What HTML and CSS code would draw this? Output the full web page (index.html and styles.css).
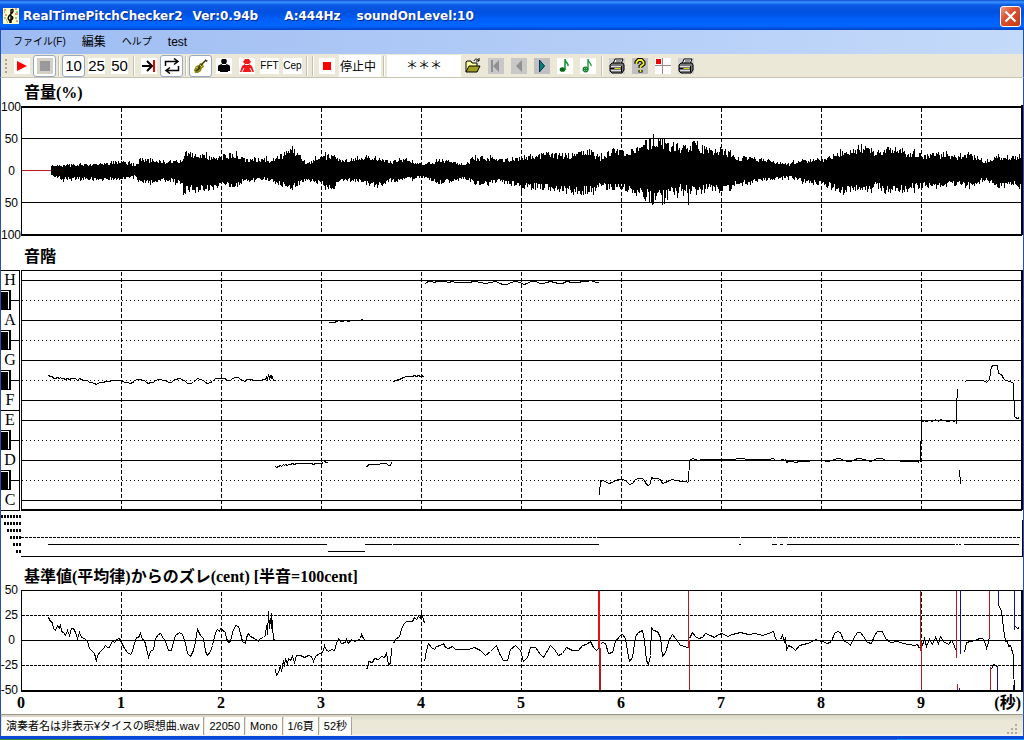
FILE: index.html
```html
<!DOCTYPE html>
<html lang="ja">
<head>
    <meta charset="UTF-8">
    <meta name="viewport" content="width=device-width, initial-scale=1.0">
    <title>RealTimePitchChecker2</title>
    <link rel="stylesheet" href="styles.css">
</head>
<body>
    <header class="titlebar">
        <svg class="app-icon" width="16" height="16" viewBox="0 0 16 16">
            <rect width="16" height="16" fill="#ffffc8"/>
            <path d="M1 2h2M12 1h2M2 7h2M12 6h3M3 12h1M13 13h2" stroke="#e03020"/>
            <path d="M1 4h1M13 4h2M1 10h2M12 10h2M4 14h1" stroke="#30a040"/>
            <path d="M8 15V2c2-2 3 1 1 3L6 8c-2 3 0 5 2 4s3-3 0-4M6 14h2" fill="none" stroke="#000" stroke-width="1.4"/>
        </svg>
        <h1 class="title">
            <span class="title-name">RealTimePitchChecker2</span>
            <span class="title-version">Ver:0.94b</span>
            <span class="title-tuning">A:444Hz</span>
            <span>soundOnLevel:10</span>
        </h1>
        <button class="close" type="button" aria-label="閉じる">
            <svg width="13" height="13" viewBox="0 0 13 13"><path d="M1.500 1.500l10 10M11.500 1.500l-10 10" stroke="#fff" stroke-width="2.200"/></svg>
        </button>
    </header>

    <nav class="menubar">
        <button class="menu kana" type="button">ファイル(F)</button>
        <button class="menu" type="button">編集</button>
        <button class="menu kana" type="button">ヘルプ</button>
        <button class="menu" type="button">test</button>
    </nav>

    <div class="toolbar">
        <span class="grip"></span>
        <button class="tool" type="button" aria-label="再生">
            <svg viewBox="0 0 16 16"><rect width="16" height="16" fill="#fff"/><path d="M3 3l10 5-10 5z" fill="#f00"/></svg>
        </button>
        <button class="tool on" type="button" aria-label="停止">
            <svg viewBox="0 0 16 16"><rect width="16" height="16" fill="#d4d0c8"/><rect x="3" y="3" width="10" height="10" fill="#999"/></svg>
        </button>
        <span class="sep"></span>
        <button class="tool num on" type="button">10</button>
        <button class="tool num" type="button"><span>25</span></button>
        <button class="tool num" type="button"><span>50</span></button>
        <span class="sep"></span>
        <button class="tool" type="button" aria-label="末尾で止める">
            <svg viewBox="0 0 16 16"><rect width="16" height="16" fill="#fff"/><path d="M1 8h9M6 3l5 5-5 5" fill="none" stroke="#000" stroke-width="2"/><rect x="12" y="2" width="2" height="12" fill="#e00"/></svg>
        </button>
        <button class="tool on" type="button" aria-label="くり返し">
            <svg viewBox="0 0 16 16"><path d="M1.500 8V3.500H13M10 .5l4 3-4 3M14.500 8v4.500H3M6 9.500l-4 3 4 3" fill="none" stroke="#000" stroke-width="1.500"/></svg>
        </button>
        <span class="sep"></span>
        <button class="tool on" type="button" aria-label="バイオリン">
            <svg viewBox="0 0 16 16"><path d="M1 12l2-4 3-1 1-2 3 1 1 3-2 1-1 3-3 2-3 0z" fill="#8a8a10"/><path d="M5 10l8-8M3 13l4-3" stroke="#403800" stroke-width="1.500"/><path d="M12 1l3 2-2 1z" fill="#303010"/><path d="M3 9l2 1M7 7l2 2" stroke="#d8d040"/></svg>
        </button>
        <button class="tool" type="button" aria-label="男声">
            <svg viewBox="0 0 16 16"><rect width="16" height="16" fill="#fff"/><path d="M6 1h4l1 2-1 3 3 1 1 1v5h-2v1H4v-1H2V8l1-1 3-1-1-3z" fill="#000"/><path d="M6 6.500h4" stroke="#fff"/></svg>
        </button>
        <button class="tool" type="button" aria-label="女声">
            <svg viewBox="0 0 16 16"><rect width="16" height="16" fill="#fff"/><path d="M6 1h4l2 3-2 2 3 2 2 6H1l2-6 3-2-2-2z" fill="#f01818"/><path d="M5 10l-2 4M11 10l2 4M6 6.500h4" stroke="#fff"/></svg>
        </button>
        <button class="tool word" type="button"><span>FFT</span></button>
        <button class="tool word" type="button"><span>Cep</span></button>
        <span class="sep"></span>
        <span class="sep"></span>
        <button class="tool state" type="button">
            <svg viewBox="0 0 16 16"><rect width="16" height="16" fill="#fff"/><rect x="4" y="4" width="8" height="8" fill="#f00"/></svg>
            <span>停止中</span>
        </button>
        <span class="sep"></span>
        <output class="note-name">＊＊＊</output>
        <button class="tool" type="button" aria-label="開く">
            <svg viewBox="0 0 16 16"><path d="M1 14V4l1-1h4l1 2h5v3" fill="#ffffa0" stroke="#000"/><path d="M1 14l3-6h11l-3 6z" fill="#a0a020" stroke="#000"/><path d="M9 3c1-3 4-2 5 0M14 0v3h-3" fill="none" stroke="#000"/></svg>
        </button>
        <button class="tool" type="button" aria-label="先頭へ">
            <svg viewBox="0 0 16 16"><rect width="16" height="16" fill="#c8c8c8"/><path d="M3 2h2v12H3zM11 2v12L5 8z" fill="#909090"/></svg>
        </button>
        <button class="tool" type="button" aria-label="前へ">
            <svg viewBox="0 0 16 16"><rect width="16" height="16" fill="#c8c8c8"/><path d="M11 2v12L5 8z" fill="#909090"/></svg>
        </button>
        <button class="tool" type="button" aria-label="次へ">
            <svg viewBox="0 0 16 16"><rect width="16" height="16" fill="#c0c0c0"/><path d="M5 2v12l6-6z" fill="#008070"/><path d="M5.500 2v12l5-6z" fill="none" stroke="#103060"/></svg>
        </button>
        <button class="tool" type="button" aria-label="音符">
            <svg viewBox="0 0 16 16"><rect width="16" height="16" fill="#fff"/><ellipse cx="5.500" cy="11.500" rx="2.800" ry="2.300" fill="#086818"/><path d="M8 12V1c0 4 4 4 3 7" fill="none" stroke="#109030" stroke-width="1.500"/></svg>
        </button>
        <button class="tool" type="button" aria-label="音符を追加">
            <svg viewBox="0 0 16 16"><rect width="16" height="16" fill="#fff"/><circle cx="5.500" cy="11.500" r="2.300" fill="none" stroke="#107828" stroke-width="1.300"/><path d="M8 12V1c0 4 4 4 3 7M5.500 10v3M4 11.500h3" fill="none" stroke="#109030" stroke-width="1.300"/></svg>
        </button>
        <span class="sep"></span>
        <button class="tool" type="button" aria-label="印刷">
            <svg viewBox="0 0 16 16"><use href="#printer"/></svg>
        </button>
        <button class="tool" type="button" aria-label="ヘルプ">
            <svg viewBox="0 0 16 16"><rect width="16" height="16" fill="#c0c0c0"/><path d="M4.500 6V4l2-2h3l2 2v2L8.500 8.500V10M8.500 12v2.500" fill="none" stroke="#000" stroke-width="4"/><path d="M4.500 6V4l2-2h3l2 2v2L8.500 8.500V10.500M8.500 12v2" fill="none" stroke="#f0f020" stroke-width="1.800"/></svg>
        </button>
        <button class="tool" type="button" aria-label="カーソル">
            <svg viewBox="0 0 16 16"><rect width="16" height="16" fill="#fff"/><path d="M7.500 0v16M0 7.500h16" stroke="#a08888"/><rect x="1" y="1" width="5" height="5" fill="#e00"/></svg>
        </button>
        <button class="tool" type="button" aria-label="画面を印刷">
            <svg viewBox="0 0 16 16"><use href="#printer"/></svg>
        </button>
    </div>

    <svg width="0" height="0" class="defs">
        <symbol id="printer" viewBox="0 0 16 16">
            <rect width="16" height="16" fill="#d0d0d0"/>
            <path d="M4 6l2-5h8l-2 5z" fill="#fff" stroke="#000"/>
            <path d="M7 3h5M6 5h5" stroke="#333"/>
            <path d="M1 7l2-2h11l1 2v5l-2 3H3l-2-2z" fill="#777" stroke="#000"/>
            <path d="M2 8.500h10M2 12.500h10" stroke="#ddd"/>
            <path d="M6 10.500h5" stroke="#e0e000"/>
            <path d="M1 10.500h4M12.500 8v6" stroke="#000"/>
        </symbol>
    </svg>

    <main class="charts">
        <h2 class="chart-title">音量(%)</h2>
        <div class="chart volume">
            <svg class="gutter" viewBox="1 106 20 130">
                <text class="value" x="21" y="111">100</text>
                <text class="value" x="18" y="143">50</text>
                <text class="value" x="15" y="175">0</text>
                <text class="value" x="18" y="207">50</text>
                <text class="value" x="21" y="239">100</text>
            </svg>
            <svg class="plot" viewBox="21 106 1002 130" preserveAspectRatio="none">
                <path class="dash second" d="M121.500 108V234M221.500 108V234M321.500 108V234M421.500 108V234M521.500 108V234M621.500 108V234M721.500 108V234M821.500 108V234M921.500 108V234"/>
                <path class="line" d="M21 138.500H1022M21 202.500H1022M21.500 106V236"/>
                <path class="red" d="M22 170h29v1H22z"/>
                <path id="wave" class="line"/>
                <path class="thick" d="M21 107H1022M21 235H1022M1022 105V235"/>
            </svg>
        </div>

        <h2 class="chart-title spaced">音階</h2>
        <div class="chart scale">
            <svg class="gutter" viewBox="1 270 20 286">
                <path class="line" d="M1 270.500H19.500V510.500H1M1 410.500H19M11 300.500H19M11 340.500H19M11 380.500H19M11 440.500H19M11 480.500H19"/>
                <path d="M1 290h10v20H1zM1 330h10v20H1zM1 370h10v20H1zM1 430h10v20H1zM1 470h10v20H1z"/>
                <path class="line white" d="M1 291.500H8.500V309M1 331.500H8.500V349M1 371.500H8.500V389M1 431.500H8.500V449M1 471.500H8.500V489"/>
                <text class="note" x="10" y="285">H</text>
                <text class="note" x="10" y="325">A</text>
                <text class="note" x="10" y="365">G</text>
                <text class="note" x="10" y="405">F</text>
                <text class="note" x="10" y="425">E</text>
                <text class="note" x="10" y="465">D</text>
                <text class="note" x="10" y="505">C</text>
                <path class="octave" d="M1 516.500H21M4 523.500H21M7 530.500H21M10 537.500H21M13 544.500H21M16 551.500H21"/>
            </svg>
            <svg class="plot" viewBox="21 270 1002 286" preserveAspectRatio="none">
                <path class="line" d="M21 270.500H1022M21.500 270V510M21 280.500H1022M21 320.500H1022M21 360.500H1022M21 400.500H1022M21 420.500H1022M21 460.500H1022M21 500.500H1022"/>
                <path class="dot" d="M22 300.500H1021M22 340.500H1021M22 380.500H1021M22 440.500H1021M22 480.500H1021"/>
                <path class="dash second" d="M121.500 272V509M221.500 272V509M321.500 272V509M421.500 272V509M521.500 272V509M621.500 272V509M721.500 272V509M821.500 272V509M921.500 272V509"/>
                <path id="pitch" class="line"/>
                <path class="thick" d="M21 510H1022M1022 270V510"/>
                <path class="dash" d="M21 537.500H1021"/>
                <path class="line" d="M599 537.500H739M741 537.500H772M777 537.500H781M783 537.500H787"/>
                <path class="line" d="M48 544.500H327M328 551.500H365M365 544.500H391.500M393 544.500H599M739 544.500H741M772 544.500H777M780 544.500H783M787 544.500H955M956 544.500H958M959 544.500H961M964 544.500H1019"/>
                <path class="line" d="M21 556.500H1022M1022.500 520V557"/>
            </svg>
        </div>

        <h2 class="chart-title spaced">基準値(平均律)からのズレ(cent) [半音=100cent]</h2>
        <div class="chart deviation">
            <svg class="gutter" viewBox="1 590 20 102">
                <text class="value" x="18" y="594">50</text>
                <text class="value" x="18" y="619">25</text>
                <text class="value" x="15" y="644">0</text>
                <text class="value" x="18" y="669">-25</text>
                <text class="value" x="18" y="694">-50</text>
            </svg>
            <svg class="plot" viewBox="21 590 1002 102" preserveAspectRatio="none">
                <path class="line" d="M21 590.500H1022M21.500 590V692M21 640.500H1022"/>
                <path class="dash" d="M22 615.500H1021M22 665.500H1021"/>
                <path class="dash second" d="M121.500 592V690M221.500 592V690M321.500 592V690M421.500 592V690M521.500 592V690M621.500 592V690M721.500 592V690M821.500 592V690M921.500 592V690"/>
                <path id="cents" class="line"/>
                <path class="thick" d="M21 691H1022M1022 590V692"/>
                <!-- note changes: red goes up, blue goes down -->
                <path class="red-up" d="M598 591h2v57h-2z"/>
                <path class="red" d="M599 648h2v42h-2zM688 591h1v57h-1zM689 640h1v50h-1zM920 591h1v60h-1zM921 642h1v48h-1zM956 591h1v67h-1zM957 684h1v6h-1zM989 591h1v47h-1zM990 667h1v23h-1z"/>
                <path class="blue" d="M960 591h1v63h-1zM959 688h1v2h-1zM998 591h1v13h-1zM997 666h1v24h-1zM1014 591h1v39h-1zM1013 685h1v5h-1z"/>
            </svg>
        </div>
        <div class="time-axis">
            <span>0</span><span>1</span><span>2</span><span>3</span><span>4</span><span>5</span><span>6</span><span>7</span><span>8</span><span>9</span><span class="unit">(秒)</span>
        </div>
    </main>

    <footer class="statusbar">
        <span class="cell">演奏者名は非表示¥タイスの瞑想曲.wav</span>
        <span class="cell">22050</span>
        <span class="cell">Mono</span>
        <span class="cell">1/6頁</span>
        <span class="cell">52秒</span>
        <svg class="resize" width="12" height="12" viewBox="0 0 12 12">
            <path d="M8 0h2v2H8zM4 4h2v2H4zM8 4h2v2H8zM0 8h2v2H0zM4 8h2v2H4zM8 8h2v2H8z" fill="#b0ac9c"/>
        </svg>
    </footer>
    <div class="taskbar"></div>
    <script src="script.js"></script>
</body>
</html>
```

FILE: styles.css
```css
* {
    box-sizing: border-box;
}
body {
    margin: 0;
    min-height: 100vh;
    display: flex;
    flex-direction: column;
    background-color: #fff;
    color: #000;
    font-family: "Liberation Sans", "Noto Sans CJK JP", sans-serif;
    font-size: 11px;
}
button {
    font-family: inherit;
    color: inherit;
    background: none;
    border: none;
    padding: 0;
}
.defs {
    position: absolute;
}
.titlebar {
    height: 30px;
    display: flex;
    align-items: center;
    padding: 2px 3px 0;
    background: linear-gradient(#0a4cd0 0, #3a94ff 2px, #0a5ae4 5px, #0050e0 12px, #0060fa 20px, #0066ff 26px, #0040c8 30px);
}
.app-icon {
    margin-right: 4px;
}
.title {
    flex: 1;
    display: flex;
    margin: 0;
    color: #fff;
    font-family: "DejaVu Sans", sans-serif;
    font-size: 12px;
    font-weight: bold;
    text-shadow: 1px 1px #0a2a90;
    white-space: nowrap;
}
.title-name {
    margin-right: 10px;
}
.title-version {
    margin-right: 26px;
}
.title-tuning {
    margin-right: 16px;
}
.close {
    width: 21px;
    height: 21px;
    display: flex;
    align-items: center;
    justify-content: center;
    border: 1px solid #fff;
    border-radius: 3px;
    background: linear-gradient(135deg, #f09a80, #dc5030 40%, #c83c10);
}
.menubar {
    height: 24px;
    display: flex;
    align-items: center;
    gap: 16px;
    padding: 0 12px;
    border-left: 1px solid #2450b0;
    border-right: 1px solid #2450b0;
    background: linear-gradient(to right, #9ebcf2, #c4dafa);
}
.menu {
    font-size: 12px;
    line-height: 24px;
}
.kana {
    font-size: 10px;
}
.toolbar {
    height: 24px;
    display: flex;
    align-items: center;
    padding-left: 4px;
    border-left: 1px solid #2450b0;
    border-right: 1px solid #2450b0;
    border-bottom: 1px solid #c8c4b4;
    background-color: #ebe8d8;
}
.grip {
    width: 2px;
    height: 14px;
    margin-right: 3px;
    background: repeating-linear-gradient(#a8a494 0, #a8a494 2px, transparent 2px, transparent 4px);
}
.tool {
    flex: none;
    width: 23px;
    height: 22px;
    display: flex;
    align-items: center;
    justify-content: center;
}
.tool svg {
    width: 16px;
    height: 16px;
}
.on {
    border: 1px solid #98a8c0;
    border-radius: 3px;
    background-color: #fff;
}
.num {
    font-size: 15px;
    line-height: 16px;
}
.word {
    font-size: 10px;
    line-height: 16px;
}
.num span, .word span {
    background-color: #fff;
}
.sep {
    flex: none;
    width: 6px;
    height: 20px;
    background: linear-gradient(to right, transparent 2px, #c4c0b0 2px, #c4c0b0 3px, #fff 3px, #fff 4px, transparent 4px);
}
.state {
    width: 65px;
    font-size: 12px;
    justify-content: flex-start;
    gap: 5px;
    padding-left: 3px;
    white-space: nowrap;
    background: linear-gradient(to right, transparent 23px, #fff 23px);
}
.note-name {
    width: 74px;
    height: 22px;
    line-height: 22px;
    font-size: 12px;
    text-align: center;
    background-color: #fff;
}
.charts {
    flex: 1;
    border-left: 1px solid #2450b0;
    border-right: 1px solid #2450b0;
}
.chart-title {
    margin: 0;
    padding: 2px 0 0 23px;
    font-family: "Liberation Serif", "Noto Sans CJK JP", serif;
    font-size: 16px;
    line-height: 26px;
    font-weight: bold;
    white-space: nowrap;
}
.spaced {
    padding-top: 8px;
}
.chart {
    display: flex;
}
.volume {
    height: 130px;
}
.scale {
    height: 286px;
}
.deviation {
    height: 102px;
}
.gutter {
    flex: none;
    width: 20px;
    height: 100%;
    overflow: visible;
}
.plot {
    flex: 1;
    min-width: 0;
    height: 100%;
    overflow: visible;
}
.line, .thick, .dash, .dot, .octave {
    fill: none;
    stroke: #000;
    stroke-width: 1;
    shape-rendering: crispEdges;
}
.thick {
    stroke-width: 2;
}
.dash {
    stroke-dasharray: 3 1;
}
.second {
    stroke-dasharray: 4 2;
}
.dot {
    stroke-dasharray: 1 3;
}
.octave {
    stroke-width: 3;
    stroke-dasharray: 2 1;
}
.red {
    fill: #b81820;
}
.red-up {
    fill: #e81010;
}
.blue {
    fill: #10109c;
}
.white {
    stroke: #fff;
}
.value {
    font-size: 12px;
    text-anchor: end;
}
.note {
    font-family: "Liberation Serif", serif;
    font-size: 16px;
    text-anchor: middle;
}
.time-axis {
    display: flex;
    justify-content: space-between;
    height: 22px;
    padding: 0 2px 0 20px;
    font-family: "Liberation Serif", "Noto Sans CJK JP", serif;
    font-size: 16px;
    line-height: 22px;
    font-weight: bold;
}
.time-axis span {
    width: 0;
    display: flex;
    justify-content: center;
    white-space: nowrap;
}
.time-axis .unit {
    justify-content: flex-end;
}
.statusbar {
    height: 22px;
    display: flex;
    align-items: center;
    padding: 0 4px 0 1px;
    border-top: 1px solid #98968a;
    border-left: 1px solid #2450b0;
    border-right: 1px solid #2450b0;
    background: linear-gradient(#d8d4c4, #ebe8d8 6px, #ebe8d8 18px, #f8f6ee);
}
.cell {
    height: 18px;
    padding: 0 4px;
    line-height: 18px;
    border-right: 1px solid #a8a494;
    margin-right: 1px;
    background-color: #fcfcfa;
    white-space: nowrap;
}
.resize {
    margin-left: auto;
    align-self: flex-end;
}
.taskbar {
    height: 4px;
    background: linear-gradient(#0848d8 3px, transparent 3px), linear-gradient(to right, #3c8c3c 105px, #2c68e0 105px, #2c68e0 897px, #18a0f0 897px);
}
```

FILE: script.js
```js
// volume envelope: [x, up, down] in pixels from the zero line
const envelope = [
    [51, 5, 5], [60, 5, 9], [80, 6, 9], [100, 7, 10], [120, 10, 9], [135, 6, 6], [140, 12, 14], [160, 10, 11],
    [183, 11, 13], [184, 19, 23], [200, 16, 21], [215, 14, 19], [225, 17, 14], [232, 18, 19], [245, 12, 11],
    [257, 12, 9], [270, 11, 11], [280, 16, 16], [290, 25, 20], [299, 18, 16], [306, 8, 10], [320, 14, 14],
    [331, 16, 21], [340, 11, 10], [362, 15, 13], [376, 14, 18], [390, 9, 12], [405, 13, 10], [421, 6, 7],
    [440, 12, 14], [465, 7, 8], [475, 15, 15], [500, 12, 12], [520, 14, 18], [545, 19, 20], [570, 17, 23],
    [590, 21, 24], [600, 14, 18], [613, 23, 20], [625, 19, 20], [640, 27, 26], [652, 34, 32], [665, 30, 27],
    [680, 25, 21], [695, 29, 24], [710, 22, 20], [722, 24, 23], [735, 14, 15], [750, 14, 14], [770, 10, 10],
    [790, 7, 7], [793, 9, 9], [810, 11, 14], [825, 12, 15], [840, 21, 25], [855, 23, 20], [865, 28, 23],
    [875, 18, 16], [885, 24, 23], [900, 22, 23], [920, 17, 17], [935, 17, 18], [955, 16, 15], [968, 19, 17],
    [985, 10, 10], [1000, 15, 18], [1021, 15, 15]
];

// played notes: y of the note's line on the scale chart, then x,y pairs on the deviation chart
const notes = [
    [380, '48,617 50,621 52,622 53,628 55,630 57,625 59,628 60,624 61,631 63,632 65,635 67,630 69,635 71,628 73,628 75,632 77,638 79,632 81,637 84,638 87,641 89,648 91,650 94,653 96,661 97,655 100,651 103,648 105,645 107,647 109,647 112,640 114,642 116,639 119,638 121,642 124,648 127,652 130,654 132,651 134,643 136,637 138,637 140,633 142,639 144,640 146,648 148,657 150,651 153,649 155,638 158,634 160,633 163,638 165,641 168,650 171,650 173,641 175,635 179,632 182,634 185,643 187,653 190,656 193,650 195,641 197,629 200,635 203,638 205,651 207,655 210,651 212,645 215,632 217,629 219,631 220,628 225,632 226,638 228,642 230,641 232,632 235,625 238,626 240,633 242,641 245,643 246,637 248,633 250,636 254,638 258,641 260,638 263,637 265,635 266,625 267,634 268,611 269,628 270,618 271,628 271,613 272,626 273,639 275,640'],
    [460, '275,669 276,675 278,672 280,665 281,671 283,660 284,666 285,658 287,664 288,658 290,660 292,656 294,662 296,655 300,655 304,657 308,655 311,656 313,661 315,656 319,653 321,653 323,650 324,645 326,650 327,650'],
    [320, '328,651 331,649 334,650 336,643 338,638 341,643 345,642 346,639 348,643 351,639 354,641 357,640 360,638 361,634 363,638 365,641'],
    [460, '365,668 367,668 368,661 372,662 374,658 378,659 381,656 384,657 386,653 388,664 390,663 391,648'],
    [380, '393,643 395,639 399,636 401,629 403,624 406,621 412,621 414,617 416,619 418,616 420,618 421,613 423,619 424,623'],
    [280, '424,661 426,650 428,643 431,647 434,649 436,646 440,645 443,643 445,647 448,648 452,646 455,649 460,649 468,649 474,647 480,650 485,655 490,651 496,645 499,653 503,660 507,660 510,649 515,645 520,650 523,661 527,657 530,647 535,647 540,654 543,657 546,652 550,645 554,649 558,655 562,653 566,647 572,650 578,650 582,645 586,644 590,641 593,647 596,650 598,648'],
    [480, '600,644 602,642 605,643 608,653 612,652 615,641 619,636 622,634 625,638 627,651 629,661 632,657 635,636 638,632 642,630 644,640 646,660 648,664 650,655 651,627 653,630 657,631 660,637 662,656 665,652 669,639 672,634 675,638 678,642 680,645 685,646 688,648'],
    [460, '689,638 692,632 695,636 698,638 702,637 705,633 710,635 714,637 718,634 722,633 727,636 732,634 740,632 748,634 755,633 762,635 768,633 773,631 775,638 777,640'],
    [460, '780,639 782,635 784,641 785,637 786,650 788,645 792,647 795,650 799,645 803,644 807,643 812,641 815,639 818,640 822,641 827,643 831,641 834,633 837,631 840,632 843,640 848,643 850,645 853,638 857,632 860,632 863,636 867,642 871,643 874,635 877,631 882,631 885,638 890,642 897,641 903,643 908,644 914,645 917,644 919,648'],
    [420, '921,640 922,645 924,638 926,646 929,639 930,641 932,644 935,637 938,643 940,636 943,641 948,644 951,640 954,645 955,650'],
    [380, '964,652 966,642 970,641 975,640 979,638 982,638 985,643 986,648 988,642 989,636'],
    [360, '991,669 993,664 995,665 997,666'],
    [380, '998,604 1001,611 1003,628 1005,641 1007,641 1008,646 1010,645 1013,655'],
    [420, '1015,626 1017,628 1019,627']
];

// jumps between neighbouring notes
const scaleJumps = 'M599.5 495L600.5 480M688.5 482L689.5 460M920.5 462L921.5 420M956.5 424L956.5 408L957.5 389M959.5 470L960.5 484M989.5 380L991.5 366M997.5 366L998.5 373M1013.5 383L1014.5 417';
const centJumps = 'M1013.5 655L1013.5 668L1014.5 690';

let seed = 11;
function random() {
    seed = (seed * 16807) % 2147483647;
    return seed / 2147483647;
}

function drawWave() {
    let d = '';
    for (let i = 1; i < envelope.length; i++) {
        const [x0, up0, down0] = envelope[i - 1];
        const [x1, up1, down1] = envelope[i];
        for (let x = x0; x < x1; x++) {
            const t = (x - x0) / (x1 - x0);
            const peak = random() > 0.95 ? 1.2 : 1;
            const up = Math.round((up0 + (up1 - up0) * t) * (0.62 + 0.4 * random()) * peak);
            const down = Math.round((down0 + (down1 - down0) * t) * (0.62 + 0.4 * random()) * peak);
            d += `M${x + 0.5} ${170 - up}V${171 + down}`;
        }
    }
    // the loudest strokes
    d += 'M653.5 134V204M645.5 140V201M649.5 139V202M694.5 141V170M688.5 170V205M652.5 170V205M292.5 146V190M183.5 170V195';
    document.getElementById('wave').setAttribute('d', d);
}

function drawNotes() {
    let cents = '';
    let pitch = '';
    notes.forEach(([base, list]) => {
        list.split(' ').forEach((pair, i) => {
            const [x, y] = pair.split(',').map(Number);
            const command = i === 0 ? 'M' : 'L';
            cents += `${command}${x + 0.5} ${y + 0.5}`;
            // 100 cents are 20px on the scale chart
            pitch += `${command}${x + 0.5} ${base + 0.5 + Math.round((y - 640) / 5)}`;
        });
    });
    document.getElementById('cents').setAttribute('d', cents + centJumps);
    document.getElementById('pitch').setAttribute('d', pitch + scaleJumps);
}

drawWave();
drawNotes();
```
